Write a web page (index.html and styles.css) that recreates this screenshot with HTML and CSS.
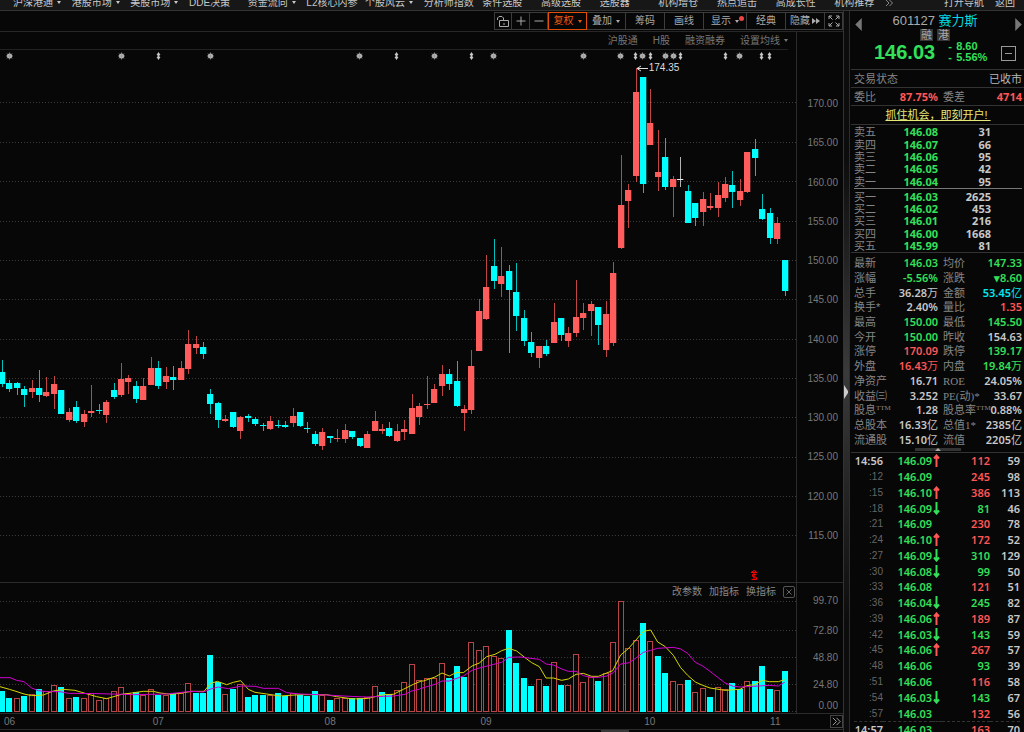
FILE: index.html
```html
<!DOCTYPE html>
<html lang="zh-CN">
<head>
<meta charset="utf-8">
<title>601127 赛力斯</title>
<link rel="stylesheet" href="styles.css">
</head>
<body>
<div class="app">
  <header class="menubar">
    <nav class="menu">
      <a class="drop" href="#">沪深港通</a><a class="drop" href="#">港股市场</a><a class="drop" href="#">美股市场</a><a href="#">DDE决策</a><a class="drop" href="#">资金流向</a><a href="#">L2核心内参</a><a class="drop" href="#">个股风云</a><a href="#">分析师指数</a><a href="#">条件选股</a><a href="#">高级选股</a><a href="#">选股器</a><a href="#">机构增仓</a><a href="#">热点追击</a><a href="#">高成长性</a><a href="#">机构推荐</a>
    </nav>
    <nav class="menu-end"><svg class="more" viewBox="0 0 8 6"><path d="M1 0l3 3-3 3M4.500 0l3 3-3 3"/></svg><a href="#">打开导航</a><a href="#">返回</a></nav>
  </header>

  <main class="workspace">
    <section class="chart">
      <div class="toolbar">
        <button class="tool tool-icon" aria-label="锁定"><svg viewBox="0 0 12 12"><path d="M2.500 5.500h9v6h-9zM.5 5V3l1.500-1.500h3L6.500 3v2.500M7 8v2"/></svg></button>
        <button class="tool tool-icon" aria-label="放大"><svg viewBox="0 0 12 12"><path d="M1.500 6h9M6 1.500v9"/></svg></button>
        <button class="tool tool-icon" aria-label="缩小"><svg viewBox="0 0 12 12"><path d="M1.500 6h9"/></svg></button>
        <button class="tool tool-drop active">复权</button>
        <button class="tool tool-drop">叠加</button>
        <button class="tool">筹码</button>
        <button class="tool">画线</button>
        <button class="tool tool-drop tool-wide">显示<i class="dot"></i></button>
        <button class="tool">经典</button>
        <button class="tool">隐藏<svg class="ff" viewBox="0 0 8 6"><path d="M0 0l4 3-4 3zM4 0l4 3-4 3z"/></svg></button>
        <button class="tool tool-icon" aria-label="全屏"><svg viewBox="0 0 12 12"><path d="M1 4V1h3M8 1h3v3M11 8v3H8M4 11H1V8M1 1l3.500 3.500M11 1L7.500 4.500M11 11L7.500 7.500M1 11l3.500-3.500"/></svg></button>
      </div>
      <div class="plots">
        <div class="subtabs"><a href="#">沪股通</a><a href="#">H股</a><a href="#">融资融券</a><a class="drop" href="#">设置均线</a></div>
        <div class="axis-head"></div>
        <div class="price">
          <svg id="price" viewBox="0 50 796 532" preserveAspectRatio="none"></svg>
          <span class="peak">174.35</span>
        </div>
        <div class="price-axis"><span>170.00</span><span>165.00</span><span>160.00</span><span>155.00</span><span>150.00</span><span>145.00</span><span>140.00</span><span>135.00</span><span>130.00</span><span>125.00</span><span>120.00</span><span>115.00</span></div>
        <div class="volume">
          <svg id="volume" viewBox="0 583 796 130" preserveAspectRatio="none"></svg>
          <div class="volume-tools"><button>改参数</button><button>加指标</button><button>换指标</button><button class="close" aria-label="关闭"><svg viewBox="0 0 12 12"><path d="M3 3l6 6M9 3l-6 6"/></svg></button></div>
        </div>
        <div class="volume-axis"><span>99.70</span><span>72.80</span><span>48.80</span><span>24.80</span><span>0.00</span></div>
      </div>
      <div class="months">
        <div class="month-list"><span>06</span><span>07</span><span>08</span><span>09</span><span>10</span><span>11</span></div>
        <button class="next" aria-label="更多"><svg viewBox="0 0 12 12"><path d="M2 2l4 4-4 4M6 2l4 4-4 4"/></svg></button>
      </div>
      <div class="handle"></div>
    </section>

    <div class="splitter"><svg viewBox="0 0 4 14"><path d="M0 0l4 6v2l-4 6z"/></svg></div>

    <aside class="quote">
      <section class="head">
        <button class="arrow" aria-label="上一只"><svg viewBox="0 0 7 14"><path d="M7 0v14L0 7z"/></svg></button>
        <div class="head-main">
          <h1><span>601127</span> <b>赛力斯</b></h1>
          <div class="tags"><span>融</span><span>港</span></div>
          <div class="last"><strong>146.03</strong><div class="change"><i>-</i><span>8.60</span><i>-</i><span>5.56%</span></div></div>
        </div>
        <div class="head-end">
          <button class="arrow" aria-label="下一只"><svg viewBox="0 0 7 14"><path d="M0 0v14l7-7z"/></svg></button>
          <button class="fold" aria-label="收起"></button>
        </div>
      </section>
      <section class="row"><span class="k">交易状态</span><span class="state">已收市</span></section>
      <section class="row ratio"><span class="k">委比</span><b class="up">87.75%</b><span class="k">委差</span><b class="up">4714</b></section>
      <section class="row promo"><a href="#">抓住机会，即刻开户!&nbsp;</a></section>
      <section class="books">
        <table class="book" id="asks"></table>
        <table class="book" id="bids"></table>
      </section>
      <section class="stats-wrap"><table class="stats" id="stats"></table><button class="tab" aria-label="收起指标"></button></section>
      <section class="ticks-wrap"><table class="ticks" id="ticks"></table><table class="ticks next-minute" id="ticks-next"></table></section>
    </aside>
  </main>
</div>
<script src="app.js"></script>
</body>
</html>
```
FILE: styles.css
```css
* { box-sizing: border-box; }
body {
  margin: 0;
  background: #070707;
  color: #c8c8c8;
  font: 10px/12px "Liberation Sans", "Noto Sans CJK SC", sans-serif;
}
a { color: inherit; text-decoration: none; white-space: nowrap; }
button {
  padding: 0;
  border: 0;
  background: none;
  color: inherit;
  font: inherit;
  white-space: nowrap;
}
svg { display: block; }
i { font-style: normal; }
table { width: 100%; border-collapse: collapse; table-layout: fixed; }
th, td { padding: 0; font-weight: inherit; white-space: nowrap; }

.app { height: 100vh; display: flex; flex-direction: column; overflow: hidden; }

.menubar {
  flex: none;
  height: 11px;
  display: grid;
  grid-template-columns: minmax(0, 880fr) minmax(0, 131fr);
  align-items: start;
  padding-left: 13px;
  line-height: 6px;
  overflow: hidden;
  background: #171717;
  border-bottom: 1px solid #333;
}
.menu { display: grid; grid-template-columns: repeat(15, 1fr); }
.more { width: 8px; height: 6px; margin: 0 40px 0 -8px; fill: none; stroke: #888; }
.menu-end { display: flex; gap: 11px; }
.drop::after, .tool-drop::after {
  content: "";
  display: inline-block;
  margin-left: 4px;
  vertical-align: 2px;
  border: 2px solid transparent;
  border-top: 3px solid;
  border-bottom: 0;
}

.workspace { flex: 1; min-height: 0; display: grid; grid-template-columns: minmax(0, 1fr) 6px 174px; }
.chart { display: flex; flex-direction: column; min-width: 0; min-height: 0; border-right: 1px solid #333; }

.toolbar {
  flex: none;
  height: 21px;
  display: flex;
  justify-content: flex-end;
  align-items: center;
  border-bottom: 1px solid #272727;
}
.tool {
  position: relative;
  width: 39px;
  height: 18px;
  display: flex;
  align-items: center;
  justify-content: center;
  border: 1px solid #3c3c3c;
  border-left-width: 0;
  color: #aaa;
}
.tool:first-child { border-left-width: 1px; }
.tool-icon { width: 18px; }
.tool-icon svg { width: 12px; height: 12px; fill: none; stroke: #aaa; }
.tool-wide { width: 43px; }
.active { color: #f05a10; border: 1px solid #e04e08; }
.ff { width: 8px; height: 6px; margin-left: 2px; fill: #aaa; }
.dot { position: absolute; top: 3px; right: 2px; width: 5px; height: 5px; border-radius: 50%; background: #f04444; }

.plots {
  flex: 1;
  min-height: 0;
  display: grid;
  grid-template-columns: minmax(0, 1fr) 47px;
  grid-template-rows: 18px minmax(0, 1fr) 131px;
}
.subtabs {
  display: flex;
  justify-content: flex-end;
  align-items: center;
  gap: 15px;
  margin-right: 8px;
  border-bottom: 1px solid #222;
  color: #777;
}
.axis-head, .price-axis, .volume-axis { border-left: 1px solid #2b2b2b; color: #777; text-align: right; }
.price { position: relative; min-height: 0; }
.price svg { width: 100%; height: 100%; }
.peak { position: absolute; left: 81.500%; top: 12px; color: #ddd; }
.price-axis { display: flex; flex-direction: column; justify-content: space-between; padding: 48px 5px 40px 0; }
.volume { display: grid; border-top: 1px solid #2b2b2b; }
.volume svg { grid-area: 1 / 1; }
.volume > svg { width: 100%; height: 130px; }
.volume-tools {
  grid-area: 1 / 1;
  display: flex;
  justify-content: flex-end;
  align-items: center;
  align-self: start;
  gap: 7px;
  height: 18px;
  padding-right: 1px;
  color: #888;
}
.close { border: 1px solid #555; border-radius: 2px; }
.close svg { width: 10px; height: 10px; fill: none; stroke: #777; }
.volume-axis {
  display: grid;
  grid-template-rows: 30px 27px 27px 21px;
  padding: 12px 5px 0 0;
  border-top: 1px solid #2b2b2b;
}

.months { flex: none; height: 17px; display: flex; align-items: center; border: solid #2b2b2b; border-width: 1px 0; }
.month-list {
  flex: 1;
  display: grid;
  grid-template-columns: 149fr 172fr 156fr 164fr 126fr 60fr;
  padding-left: 4px;
  color: #777;
}
.next { border: 1px solid #444; }
.next svg { width: 11px; height: 11px; fill: none; stroke: #aaa; }
.handle { flex: none; width: 28px; height: 2px; margin-left: 71.300%; background: #383838; }

.splitter {
  display: flex;
  align-items: center;
  border-right: 1px solid #2d2d2d;
  background: linear-gradient(#0c0c0c 20%, #3a3a3a 50%, #0c0c0c 85%);
}
.splitter svg { width: 4px; height: 14px; margin-top: 40px; fill: #ccc; }

.quote { min-width: 0; min-height: 0; overflow: hidden; padding-left: 1px; font-size: 11px; }
.quote > section { border-bottom: 1px solid #333; }
.k, .stats th, .book th { color: #858585; font-weight: 400; text-align: left; }
.up { color: #ff5656; }
.down { color: #33e05a; }
.cyan { color: #00e8f0; }
.unit { font-weight: 400; }

.head { height: 59px; display: flex; justify-content: space-between; padding: 2px 2px 0 4px; }
.arrow { align-self: flex-start; margin-top: 5px; }
.arrow svg { width: 7px; height: 13px; fill: #777; }
.head-main { flex: 1; padding-left: 7px; }
h1 { margin: 0; text-align: center; font-size: 13px; line-height: 16px; font-weight: 400; white-space: nowrap; color: #aaa; }
h1 b { color: #00dce4; font-weight: 400; }
.tags { display: flex; justify-content: center; gap: 4px; }
.tags span { width: 13px; height: 12px; background: #363636; color: #aaa; text-align: center; line-height: 12px; }
.last { display: flex; align-items: center; gap: 13px; padding-left: 5px; color: #33e05a; }
.last strong { font-size: 20px; line-height: 22px; }
.change { display: grid; grid-template-columns: 8px auto; font-weight: 700; line-height: 11px; }
.head-end { display: flex; flex-direction: column; align-items: flex-end; gap: 15px; }
.head-end .arrow { align-self: flex-end; }
.fold { width: 15px; height: 15px; margin-right: 6px; border: 1px solid #999; background: linear-gradient(#999, #999) center / 7px 1px no-repeat; }

.row { height: 18px; display: flex; align-items: center; justify-content: space-between; padding: 0 2px 0 3px; }
.state { color: #b8b8b8; }
.row b, .book td, .stats td, .ticks { font-family: "Noto Sans", "Noto Sans CJK SC", sans-serif; font-weight: 700; }
.ratio { display: grid; grid-template-columns: 24px 60px 29px 1fr; }
.ratio b { text-align: right; }
.ratio .k:nth-child(3) { padding-left: 5px; }
.promo { height: 19px; justify-content: center; color: #e8e878; }
.promo a { text-decoration: underline; }

.book { line-height: 12px; }
.books { padding: 1px 2px 0 3px; }
.book td { text-align: right; width: 52px; }
.book th { width: 32px; }
.book td:last-child { width: auto; padding-right: 31px; }
#asks { height: 63px; border-bottom: 1px solid #777; }
#bids { height: 61px; margin-top: 2px; }

.stats-wrap { position: relative; height: 200px; padding: 3px 2px 0 3px; }
.stats { height: 191px; line-height: 14px; }
.stats th { width: 24px; }
.stats td { width: 60px; text-align: right; }
.stats th:nth-child(3) { width: 29px; padding-left: 5px; }
.stats td:last-child { width: auto; }
.stats th, .stats td { overflow: visible; }
.stats td { font-weight: 600; }
.serif { font-family: "Liberation Serif", "Noto Sans CJK SC", serif; }
sup { font: 7px/7px "Liberation Serif", serif; vertical-align: 4px; }
.tab {
  position: absolute;
  left: 64px;
  bottom: 1px;
  width: 46px;
  height: 3px;
  background: #333;
}
.tab::after { content: ""; display: block; width: 0; margin: 0 auto; border: 3px solid transparent; border-top: 0; border-bottom: 3px solid #aaa; }

.ticks { height: 268px; line-height: 15px; font-weight: 600; text-align: right; }
.quote > .ticks-wrap { padding: 0 4px 0 3px; border: 0; }
.ticks .t { width: 29px; }
.ticks .sec { color: #666; font: 10px/15px "Liberation Sans", sans-serif; }
.ticks .p { width: 49px; color: #33e05a; }
.ticks .a { width: 10px; }
.ticks .a svg { width: 7px; height: 13px; margin-left: 1px; fill: none; stroke: currentColor; stroke-width: 2px; }
.ticks .v { width: 48px; }
.next-minute { height: 16px; border-top: 1px dashed #333; }
```
FILE: app.js
```js
const NS = "http://www.w3.org/2000/svg";
const STEP = 7.457;
const FIRST = 1.7;
const RED = "#ff5c5c";
const CYAN = "#00ffff";

function add(parent, tag, attrs) {
  const node = document.createElementNS(NS, tag);
  for (const key in attrs) node.setAttribute(key, attrs[key]);
  parent.appendChild(node);
  return node;
}

// Each run: base y, then "colour high low top bottom" per day, in thirds of a pixel.
const candleRuns = [
  [300, `c 180 262 217 251,c 240 275 250 266,c 246 284 250 264,c 259 320 267 285,r 240 293 264 276,c 210 305 264 285,r 231 290 276 289,r 229 327 252 282,c 270 342 270 342,r 325 367 335 360,c 303 369 322 364,r 330 380 343 366,r 255 350 333 339,c 312 342 330 333,r 300 369 305 345,c 249 296 270 291,r 190 290 237 284,r 225 281 234 246,c 244 308 259 296,r 234 301 259 300,r 171 254 205 254,c 183 266 205 257,r 200 266 228 246,c 198 269 231 240,r 183 240 205 240,r 90 222 132 207,r 108 161 132 144,c 126 177 141 161,c 266 342 281 312,c 306 383 310 359,r 345 366 357 362,c 337 383 337 381,r 348 416 352 393,c 342 365 348 353,c 352 377 357 371,c 370 392 375 378,r 348 389 363 387,c 360 384 374 378,c 363 384 375 381,r 325 380 348 369,c 337 380 337 377,c 366 399 384 388,c 394 437 401 432,r 384 449 396 437,c 408 429 408 415,r 386 425 413 418,r 372 429 390 416,c 394 416 394 411,c 414 440 414 437,r 394 443 402 443,r 332 392 363 392,r 372 402 387 393,c 366 410 384 408,r 372 425 393 423,r 360 419 387 396,r 281 402 324 402,r 309 374 318 352,r 229 326 312 315,r 252 308 267 308,r 196 288 222 258,c 207 269 222 252,c 183 320 243 318,r 316 392 327 339,r 151 342 198 330`],
  [220, `r 237 392 272 392,r 105 301 201 296,c 57 206 137 183,r 81 230 168 192,c 135 398 152 210,c 129 332 216 288,c 269 377 293 364,c 335 410 365 399,r 378 445 378 413,c 360 407 378 402,r 249 368 306 368,c 293 362 293 345,r 320 380 338 362,r 181 350 291 339,r 249 330 279 293,r 244 348 252 274,c 262 375 262 315,r 244 410 283 389,r 127 377 159 368`],
  [50, `r 316 598 466 593,r 402 533 419 452,r 54 395 127 378,c 81 429 82 401,r 117 285 219 285,r 240 422 366 380,c 263 419 321 412,r 378 500 388 410,w 321 410 388 390,c 405 518 424 518,c 459 527 459 503,r 427 527 447 485,r 429 480 468 473,r 395 500 436 473,r 381 456 402 443,c 363 473 405 425,r 387 468 424 449,r 306 429 307 426,c 267 377 298 324,c 432 510 477 507,c 473 581 489 563,r 502 581 520 567,c 630 737 631 722`]
];

const volumeRuns = [
  [590, "c303 c323 r325 c318 r311 c296 r302 r284 c292 r323 c321 r325 r308 r331 r323 r302 r292 r308 c306 r316 r298 c314 r316 c310 r308 r280 c310 c310 c194 c275 r311 c296 r283 c321 c316 c316 r314 c308 c317 r308 c315 c317 c304 r316 c330 r325 r323 c325 c324 r321 r287 c306 c312 r301 r277 r223 r271"],
  [560, "r355 r353 r310 c355 c318 c352 r247 r271 r257 r289 r294 c211 c309 c354 c379 r358 c379 r307 c374 r375 r283 r367 r352 c362 r338 r245 r123 r265 r241 c188 r242 c287 c338 r364 r373 c360 r397 r385 c412 r382 r388 c370 c388 r362 c362 c318 c387 r390 c333"]
];

const averages = {
  "#d6d600": [
    [0, 590, "0,290 28,298 45,303 72,312 95,317 130,315 160,303 190,298 225,301 245,307 290,320 320,326 365,313 395,309 430,304 460,304 480,309 515,313 545,309 575,304 612,304 632,280 652,274 680,284 700,277 722,272 745,298 765,307 800,312 840,318 900,314 980,314 1010,320 1060,327 1105,325 1150,314 1180,313 1210,298 1240,283 1264,273"],
    [420, 560, "10,363 45,351 66,339 88,348 108,338 130,338 156,318 178,309 200,290 225,283 245,272 266,265 290,273 315,293 335,308 358,320 378,354 400,354 425,361 445,357 468,343 490,340 515,349 535,349 560,339 578,332 602,285 625,266 648,240 670,214 692,210 713,246 736,260 760,286 782,323 803,346 826,366 848,376 870,384 915,391 960,388 980,377 1003,374 1027,361 1048,365 1075,365 1094,359"]
  ],
  "#d000d0": [
    [0, 590, "0,263 30,263 50,271 72,275 95,294 115,302 140,305 180,305 205,310 300,311 400,314 500,312 545,307 575,304 610,306 635,296 655,291 685,296 725,288 765,289 790,295 835,295 860,308 900,312 960,314 1050,319 1100,321 1150,319 1180,318 1215,313 1235,303 1258,298"],
    [420, 560, "0,386 45,373 66,363 88,363 130,348 156,331 178,324 225,312 245,307 266,292 300,291 358,298 378,312 400,315 425,327 445,334 468,334 490,347 515,352 535,352 560,348 580,338 602,312 628,308 648,294 670,277 692,271 713,265 760,262 782,267 803,280 826,307 848,318 870,334 893,352 915,369 940,379 960,381 1000,379 1048,376 1075,378 1094,367"]
  ]
};

function grid(svg, ys) {
  for (const y of ys) add(svg, "path", { d: `M0 ${y + 0.5}H796`, stroke: "#3a3a3a", "stroke-dasharray": "1 2", fill: "none" });
}

const price = document.getElementById("price");
grid(price, [102, 142, 181, 221, 260, 299, 339, 378, 417, 457, 496, 535]);
let day = 0;
for (const [base, run] of candleRuns) {
  for (const item of run.split(",")) {
    const [kind, ...values] = item.split(" ");
    const [high, low, top, bottom] = values.map(v => Math.round(base + v / 3));
    const x = Math.round(FIRST + day++ * STEP);
    const fill = { r: RED, c: CYAN, w: "#eeeeee" }[kind];
    add(price, "rect", { x, y: high, width: 1, height: Math.max(1, low - high), fill, opacity: 0.75 });
    add(price, "rect", { x: x - 3, y: top, width: 6, height: Math.max(1, bottom - top), fill });
    add(price, "rect", { x: x + 3, y: top, width: 1, height: Math.max(1, bottom - top), fill, opacity: 0.3 });
  }
}

// Event markers along the top of the price plot.
for (const x of [9, 121, 210, 359, 434, 493, 583, 620, 642, 665, 673, 739]) {
  add(price, "circle", { cx: x + 0.5, cy: 56, r: 2.5, fill: "#ccc" });
  add(price, "path", { d: `M${x + 0.5} 52.500v7M${x - 3} 56h7M${x - 2} 53.500l5 5M${x + 3} 53.500l-5 5`, stroke: "#999", "stroke-width": 0.8 });
}
for (const x of [158, 396, 471, 635, 650, 680, 725, 761, 769])
  add(price, "path", { d: `M${x + 0.5} 52l2 3h-1v2h1l-2 3-2-3h1v-2h-1z`, fill: "#c8c8c8" });

add(price, "path", { d: "M648 68.500H637M641 66l-4 2.500 4 2.500", stroke: "#ddd", fill: "none" });
add(price, "path", { d: "M751 572.500l3-2 3 2zM756.500 574.500h-4v2l4 1v2h-5M754 572v8", stroke: "#f00", fill: "none" });

const volume = document.getElementById("volume");
grid(volume, [601, 630, 657, 684, 711]);
day = 0;
for (const [base, run] of volumeRuns) {
  for (const item of run.split(" ")) {
    const y = Math.round(base + item.slice(1) / 3);
    const x = Math.round(FIRST + day++ * STEP);
    if (item[0] === "c") add(volume, "rect", { x: x - 3, y, width: 6, height: 712 - y, fill: CYAN });
    else add(volume, "rect", { x: x - 2.5, y: y + 0.5, width: 5, height: 711 - y, fill: "#070707", stroke: "#b84444" });
  }
}
for (const color in averages) {
  const points = averages[color].flatMap(([dx, dy, list]) =>
    list.split(" ").map(p => p.split(",")).map(([x, y]) => `${dx + x / 3},${dy + y / 3}`));
  add(volume, "polyline", { points: points.join(" "), fill: "none", stroke: color });
}

const book = rows => rows.map(([k, p, v]) => `<tr><th>${k}</th><td class="down">${p}</td><td>${v}</td></tr>`).join("");
document.getElementById("asks").innerHTML = book([["卖五", "146.08", 31], ["卖四", "146.07", 66], ["卖三", "146.06", 95], ["卖二", "146.05", 42], ["卖一", "146.04", 95]]);
document.getElementById("bids").innerHTML = book([["买一", "146.03", 2625], ["买二", "146.02", 453], ["买三", "146.01", 216], ["买四", "146.00", 1668], ["买五", "145.99", 81]]);

const unit = v => v.replace(/[万亿]/, '<span class="unit">$&</span>');
document.getElementById("stats").innerHTML = [
  ["最新", "146.03", "down", "均价", "147.33", "down"],
  ["涨幅", "-5.56%", "down", "涨跌", "▾8.60", "down"],
  ["总手", "36.28万", "", "金额", "53.45亿", "cyan"],
  ["换手*", "2.40%", "", "量比", "1.35", "up"],
  ["最高", "150.00", "down", "最低", "145.50", "down"],
  ["今开", "150.00", "down", "昨收", "154.63", ""],
  ["涨停", "170.09", "up", "跌停", "139.17", "down"],
  ["外盘", "16.43万", "up", "内盘", "19.84万", "down"],
  ["净资产", "16.71", "", '<span class="serif">ROE</span>', "24.05%", ""],
  ["收益㈢", "3.252", "", '<span class="serif">PE(动)*</span>', "33.67", ""],
  ["股息<sup>TTM</sup>", "1.28", "", "股息率<sup>TTM</sup>", "0.88%", ""],
  ["总股本", "16.33亿", "", '总值<span class="serif">1*</span>', "2385亿", ""],
  ["流通股", "15.10亿", "", "流值", "2205亿", ""]
].map(([k1, v1, c1, k2, v2, c2]) => `<tr><th>${k1}</th><td class="${c1}">${unit(v1)}</td><th>${k2}</th><td class="${c2}">${unit(v2)}</td></tr>`).join("");

const arrows = {
  u: '<svg class="up" viewBox="0 0 7 13"><path d="M3.500 13V2M1 4.500l2.500-3L6 4.500"/></svg>',
  d: '<svg class="down" viewBox="0 0 7 13"><path d="M3.500 0v11M1 8.500l2.500 3 2.500-3"/></svg>',
  "-": ""
};
const tick = line => {
  const [time, p, arrow, side, vol, count] = line.split(" ");
  return `<tr><td class="t${time[0] === ":" ? " sec" : ""}">${time}</td><td class="p">${p}</td><td class="a">${arrows[arrow]}</td><td class="v ${side === "r" ? "up" : "down"}">${vol}</td><td>${count}</td></tr>`;
};
document.getElementById("ticks").innerHTML = `14:56 146.09 u r 112 59
:12 146.09 - r 245 98
:15 146.10 u r 386 113
:18 146.09 d g 81 46
:21 146.09 - r 230 78
:24 146.10 u r 172 52
:27 146.09 d g 310 129
:30 146.08 d g 99 50
:33 146.08 - r 121 51
:36 146.04 d g 245 82
:39 146.06 u r 189 87
:42 146.03 d g 143 59
:45 146.06 u r 267 57
:48 146.06 - g 93 39
:51 146.06 - r 116 58
:54 146.03 d g 143 67
:57 146.03 - r 132 56`.split("\n").map(tick).join("");
document.getElementById("ticks-next").innerHTML = tick("14:57 146.03 - r 163 70");
```
